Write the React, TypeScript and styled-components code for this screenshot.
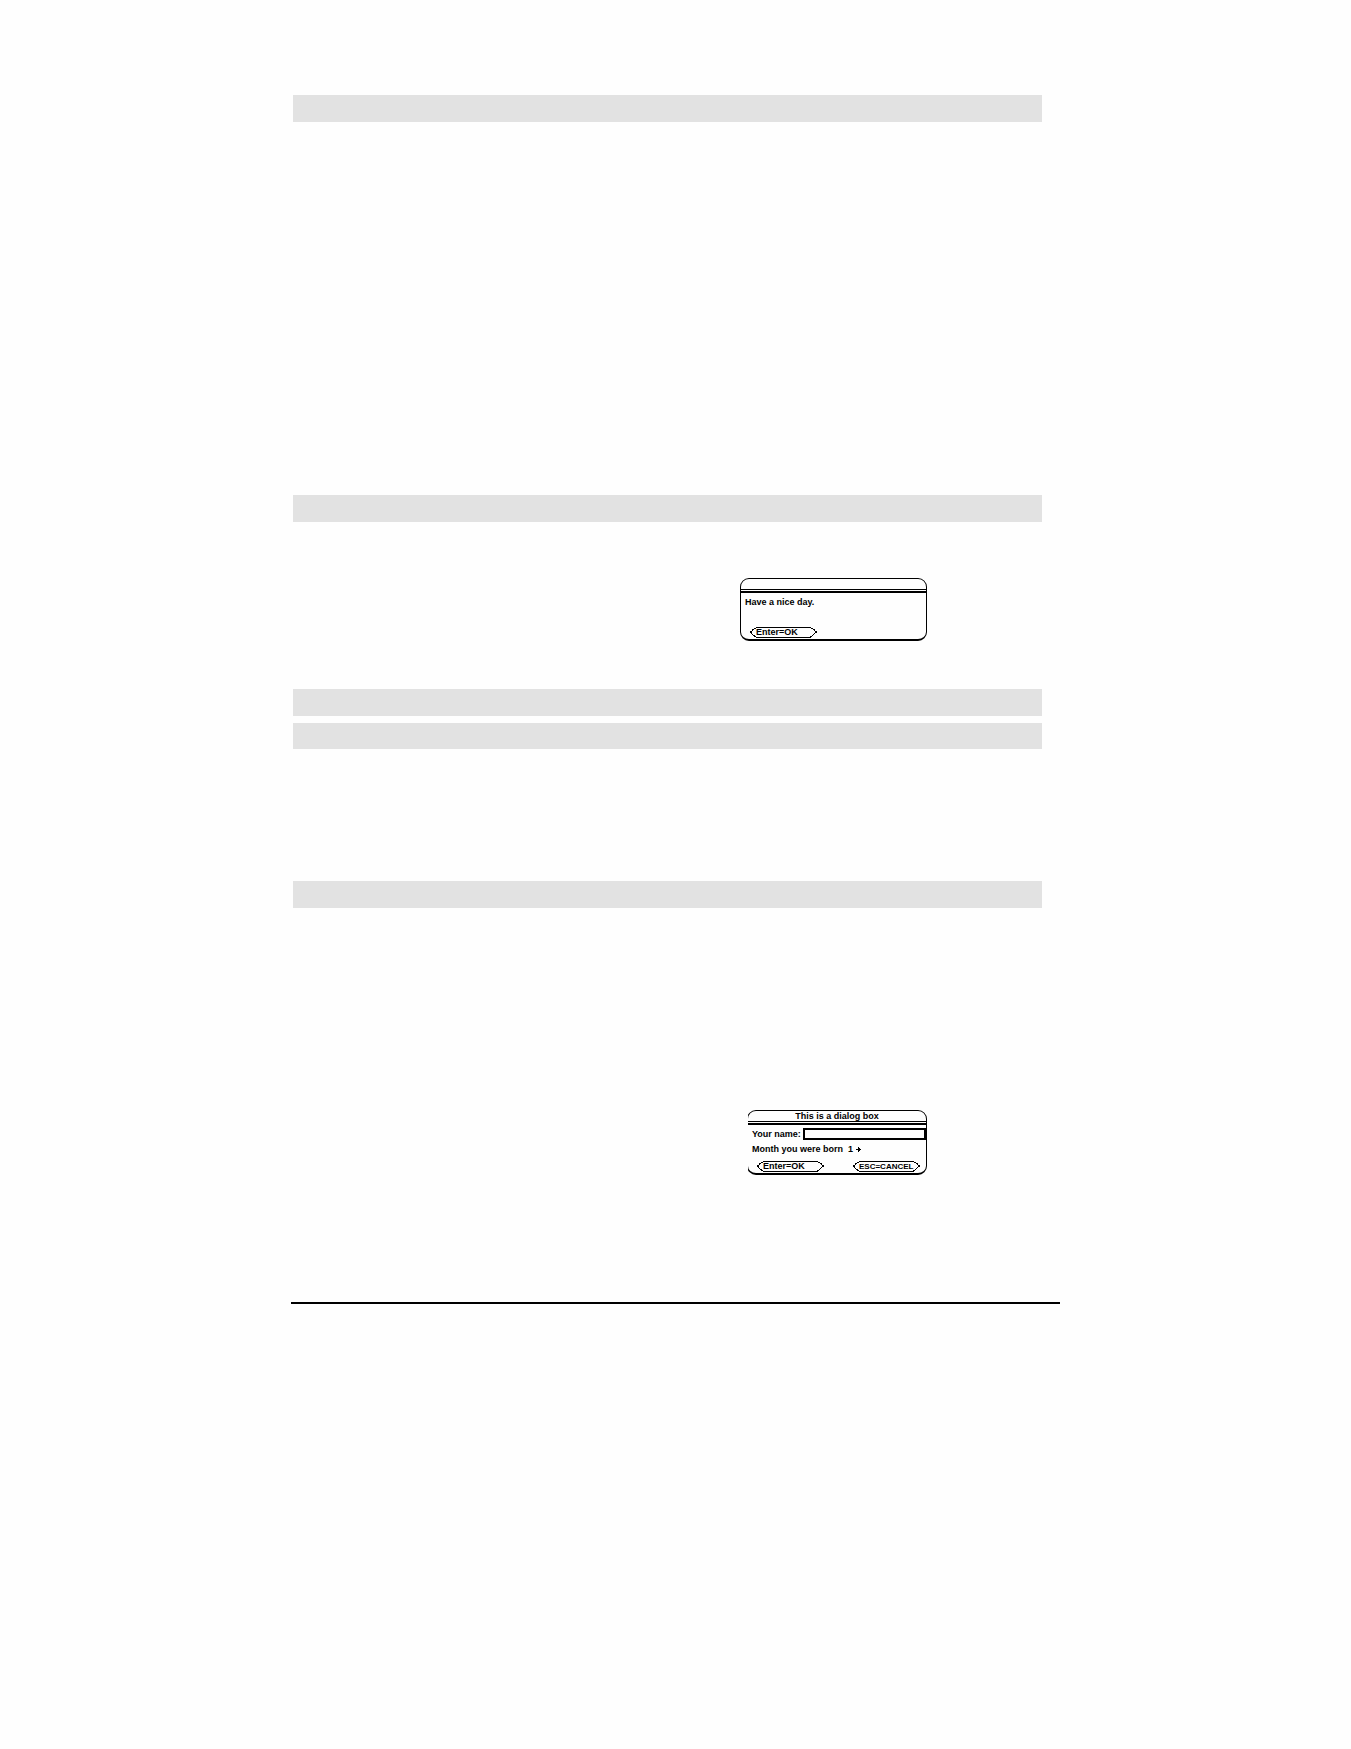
import React from "react";
import styled, { createGlobalStyle } from "styled-components";

const GlobalStyle = createGlobalStyle`
  *, *::before, *::after { box-sizing: border-box; }
  body {
    margin: 0;
    background: #fefefe;
    color: #000;
    font: bold 9px/11px "Liberation Sans", Arial, sans-serif;
  }
`;

const Page = styled.main`
  max-width: 769px;
  margin: 0 auto;
  padding-top: 95px;
`;

const Content = styled.div`
  padding: 0 18px 0 2px;
`;

const Band = styled.header<{ $height?: number }>`
  height: ${(p) => p.$height ?? 27}px;
  background: #e2e2e2;
`;

const SectionBody = styled.div<{ $space: number; $top?: number }>`
  display: flex;
  justify-content: flex-end;
  align-items: flex-start;
  min-height: ${(p) => p.$space}px;
  padding: ${(p) => p.$top ?? 0}px 115px 0 0;
`;

const Rule = styled.hr`
  height: 2px;
  margin: 0;
  border: 0;
  background: #000;
`;

const Dialog = styled.form<{ $width: number; $clipped?: boolean }>`
  width: ${(p) => p.$width}px;
  border: 1px solid #000;
  border-bottom-width: 2px;
  border-radius: 9px;
  clip-path: ${(p) => (p.$clipped ? "inset(0 0 0 1px)" : "none")};
`;

const Title = styled.h2`
  height: 11px;
  margin: 0 0 1px;
  border-bottom: 1px solid #000;
  font: inherit;
  line-height: 10px;
  text-align: center;
`;

const DialogBody = styled.div`
  display: flex;
  flex-direction: column;
  gap: 4px;
  padding: 4px 0 1px 4px;
  border-top: 2px solid #000;
`;

const Line = styled.div<{ $gap?: number }>`
  display: flex;
  align-items: flex-end;
  gap: ${(p) => p.$gap ?? 5}px;
  height: 11px;
  white-space: pre;
`;

const NameInput = styled.input`
  flex: 1;
  min-width: 0;
  height: 12px;
  padding: 0 2px;
  border: 2px solid #000;
  border-radius: 0;
  background: transparent;
  font: inherit;
  line-height: 8px;
  outline: 0;
`;

const MonthSelect = styled.select`
  appearance: none;
  height: 11px;
  padding: 0;
  border: 0;
  background: transparent;
  color: inherit;
  font: inherit;
`;

const MonthField = styled.span`
  display: flex;
  align-items: center;
  gap: 2px;
`;

const Actions = styled.div<{ $top: number; $left: number }>`
  display: flex;
  justify-content: space-between;
  padding: ${(p) => p.$top}px 6px 0 ${(p) => p.$left}px;
`;

const PillButton = styled.button<{ $small?: boolean }>`
  display: grid;
  width: 67px;
  height: 11px;
  padding: 0;
  border: 0;
  background: transparent;
  color: inherit;
  font: inherit;
  font-size: ${(p) => (p.$small ? 8 : 9)}px;
  line-height: 11px;
  text-align: left;

  > * {
    grid-area: 1 / 1;
  }
`;

const PillLabel = styled.span`
  padding-left: 6px;
`;

function Pill({ children, small }: { children: string; small?: boolean }) {
  return (
    <PillButton type="button" $small={small}>
      <svg width="67" height="11" viewBox="0 0 67 11" fill="none" stroke="#000" shapeRendering="crispEdges" aria-hidden="true">
        <path d="M6 .5H61M61 1.5H63M63 2.5H65M64 3.5H65M65 4.5H67M65 5.5H67M64 6.5H65M63 7.5H64M62 8.5H63M60 9.5H62M6 10.5H61M4 1.5H6M2 2.5H4M2 3.5H3M0 4.5H2M0 5.5H2M1 6.5H2M2 7.5H3M3 8.5H5M4 9.5H6" />
      </svg>
      <PillLabel>{children}</PillLabel>
    </PillButton>
  );
}

function Arrow() {
  return (
    <svg width="5" height="5" viewBox="0 0 5 5" fill="#000" shapeRendering="crispEdges" aria-hidden="true">
      <path d="M0 2h5v1H0zM2 0h1v5H2zM3 1h1v3H3z" />
    </svg>
  );
}

export default function App() {
  return (
    <>
      <GlobalStyle />
      <Page>
        <Content>
          <section>
            <Band />
            <SectionBody $space={373} />
          </section>
          <section>
            <Band />
            <SectionBody $space={167} $top={56}>
              <Dialog $width={187}>
                <Title />
                <DialogBody>
                  <Line>Have a nice day.</Line>
                  <Actions $top={15} $left={5}>
                    <Pill>Enter=OK</Pill>
                  </Actions>
                </DialogBody>
              </Dialog>
            </SectionBody>
          </section>
          <section>
            <Band />
            <SectionBody $space={7} />
          </section>
          <section>
            <Band $height={26} />
            <SectionBody $space={132} />
          </section>
          <section>
            <Band />
            <SectionBody $space={394} $top={202}>
              <Dialog $width={180} $clipped>
                <Title>This is a dialog box</Title>
                <DialogBody>
                  <Line $gap={2}>
                    <label htmlFor="name">Your name:</label>
                    <NameInput id="name" type="text" />
                  </Line>
                  <Line>
                    <label htmlFor="month">Month you were born</label>
                    <MonthField>
                      <MonthSelect id="month" defaultValue="1">
                        <option>1</option>
                      </MonthSelect>
                      <Arrow />
                    </MonthField>
                  </Line>
                  <Actions $top={2} $left={5}>
                    <Pill>Enter=OK</Pill>
                    <Pill small>ESC=CANCEL</Pill>
                  </Actions>
                </DialogBody>
              </Dialog>
            </SectionBody>
          </section>
        </Content>
        <Rule />
      </Page>
    </>
  );
}
